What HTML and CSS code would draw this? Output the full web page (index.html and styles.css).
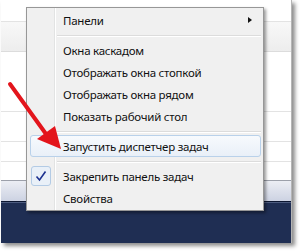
FILE: index.html
```html
<!DOCTYPE html>
<html lang="ru">
<head>
    <meta charset="UTF-8">
    <meta name="viewport" content="width=device-width, initial-scale=1.0">
    <title>Контекстное меню панели задач</title>
    <link rel="stylesheet" href="styles.css">
</head>
<body>
    <div class="window">
        <div class="row row-top"></div>
        <div class="row row-head"></div>
        <div class="row row-tall"></div>
        <div class="row row-mid"></div>
        <div class="row row-low"></div>
        <div class="row row-last"></div>
        <div class="bottom-bar"></div>
        <div class="taskbar"></div>
    </div>

    <div class="menu">
        <div class="item">
            <span class="label">Панели</span>
            <span class="submenu"></span>
        </div>
        <div class="sep"></div>
        <div class="item"><span class="label">Окна каскадом</span></div>
        <div class="item"><span class="label">Отображать окна стопкой</span></div>
        <div class="item"><span class="label">Отображать окна рядом</span></div>
        <div class="item"><span class="label">Показать рабочий стол</span></div>
        <div class="sep"></div>
        <div class="item hover"><span class="label">Запустить диспетчер задач</span></div>
        <div class="sep"></div>
        <div class="item">
            <span class="check">
                <svg width="12" height="12" viewBox="0 0 12 12">
                    <path d="M1.5 6.5 L4.5 10 L10.5 1.5" fill="none" stroke="#1d3190" stroke-width="1.6"/>
                </svg>
            </span>
            <span class="label">Закрепить панель задач</span>
        </div>
        <div class="item"><span class="label">Свойства</span></div>
    </div>

    <!-- red pointer over the menu -->
    <svg class="pointer" width="301" height="252" viewBox="0 0 301 252">
        <line x1="10" y1="84" x2="46" y2="134" stroke="#e3151c" stroke-width="4" stroke-linecap="round"/>
        <polygon points="61,149 37,139 55,126" fill="#e3151c"/>
    </svg>
</body>
</html>
```

FILE: styles.css
```css
body {
    margin: 0;
    background: #fff;
    font-family: 'Noto Sans', 'DejaVu Sans', sans-serif;
    font-size: 11.5px;
    color: #111;
    width: 301px;
    height: 252px;
    overflow: hidden;
    position: relative;
}
.window {
    margin-left: 1px;
    width: 290px;
    height: 243px;
    display: flex;
    flex-direction: column;
    background: #fff;
    border-right: 1px solid #b5b5b5;
    box-shadow: 3px 3px 4px rgba(0,0,0,0.45);
}
.row {
    border-bottom: 1px solid #e3e3e3;
    background: #fff;
}
.row-top { height: 21px; }
.row-head {
    height: 29px;
    background: linear-gradient(#f8f8f8, #ededed);
    border-bottom-color: #dcdcdc;
}
.row-tall { height: 59px; }
.row-mid { height: 29px; }
.row-low { height: 19px; }
.row-last {
    height: 18px;
    border-bottom-color: #9ca0aa;
}
.bottom-bar {
    height: 20px;
    background: linear-gradient(#eceef4, #ccd2e2);
}
.taskbar {
    flex: 1;
    background: #1f2e53;
    border-top: 1px solid #0c1631;
    box-shadow: inset 0 1px 0 #4d5c80;
}
.menu {
    position: absolute;
    left: 26px;
    top: 7px;
    width: 236px;
    padding: 1px 0 1px;
    border: 1px solid #979797;
    background: #f0f0f0 linear-gradient(to right, transparent 27px, #e2e3e3 27px, #e2e3e3 28px, #fff 28px, #fff 29px, transparent 29px);
    box-shadow: 2px 2px 3px rgba(0,0,0,0.4);
}
.item {
    height: 22px;
    margin: 0 2px 0 3px;
    display: flex;
    align-items: center;
    position: relative;
    border: 1px solid transparent;
    border-radius: 3px;
    box-sizing: border-box;
}
.item .label {
    padding-left: 32px;
    letter-spacing: -0.25px;
    white-space: nowrap;
}
.item.hover {
    border-color: #b9d1ea;
    background: linear-gradient(#f7fafd, #e9f0f8);
}
.submenu {
    margin-left: auto;
    margin-right: 8px;
    width: 0;
    height: 0;
    border-top: 3.5px solid transparent;
    border-bottom: 3.5px solid transparent;
    border-left: 4px solid #111;
}
.check {
    position: absolute;
    left: 0;
    top: 0;
    width: 20px;
    height: 20px;
    box-sizing: border-box;
    border: 1px solid #b3cbe5;
    border-radius: 3px;
    background: #e9f0f8;
    display: flex;
    align-items: center;
    justify-content: center;
}
.sep {
    height: 8px;
    margin-left: 30px;
    margin-right: 2px;
    background: linear-gradient(transparent 4px, #dcdcdc 4px, #dcdcdc 5px, #fff 5px, #fff 6px, transparent 6px);
}
.pointer {
    position: absolute;
    left: 0;
    top: 0;
}
```
